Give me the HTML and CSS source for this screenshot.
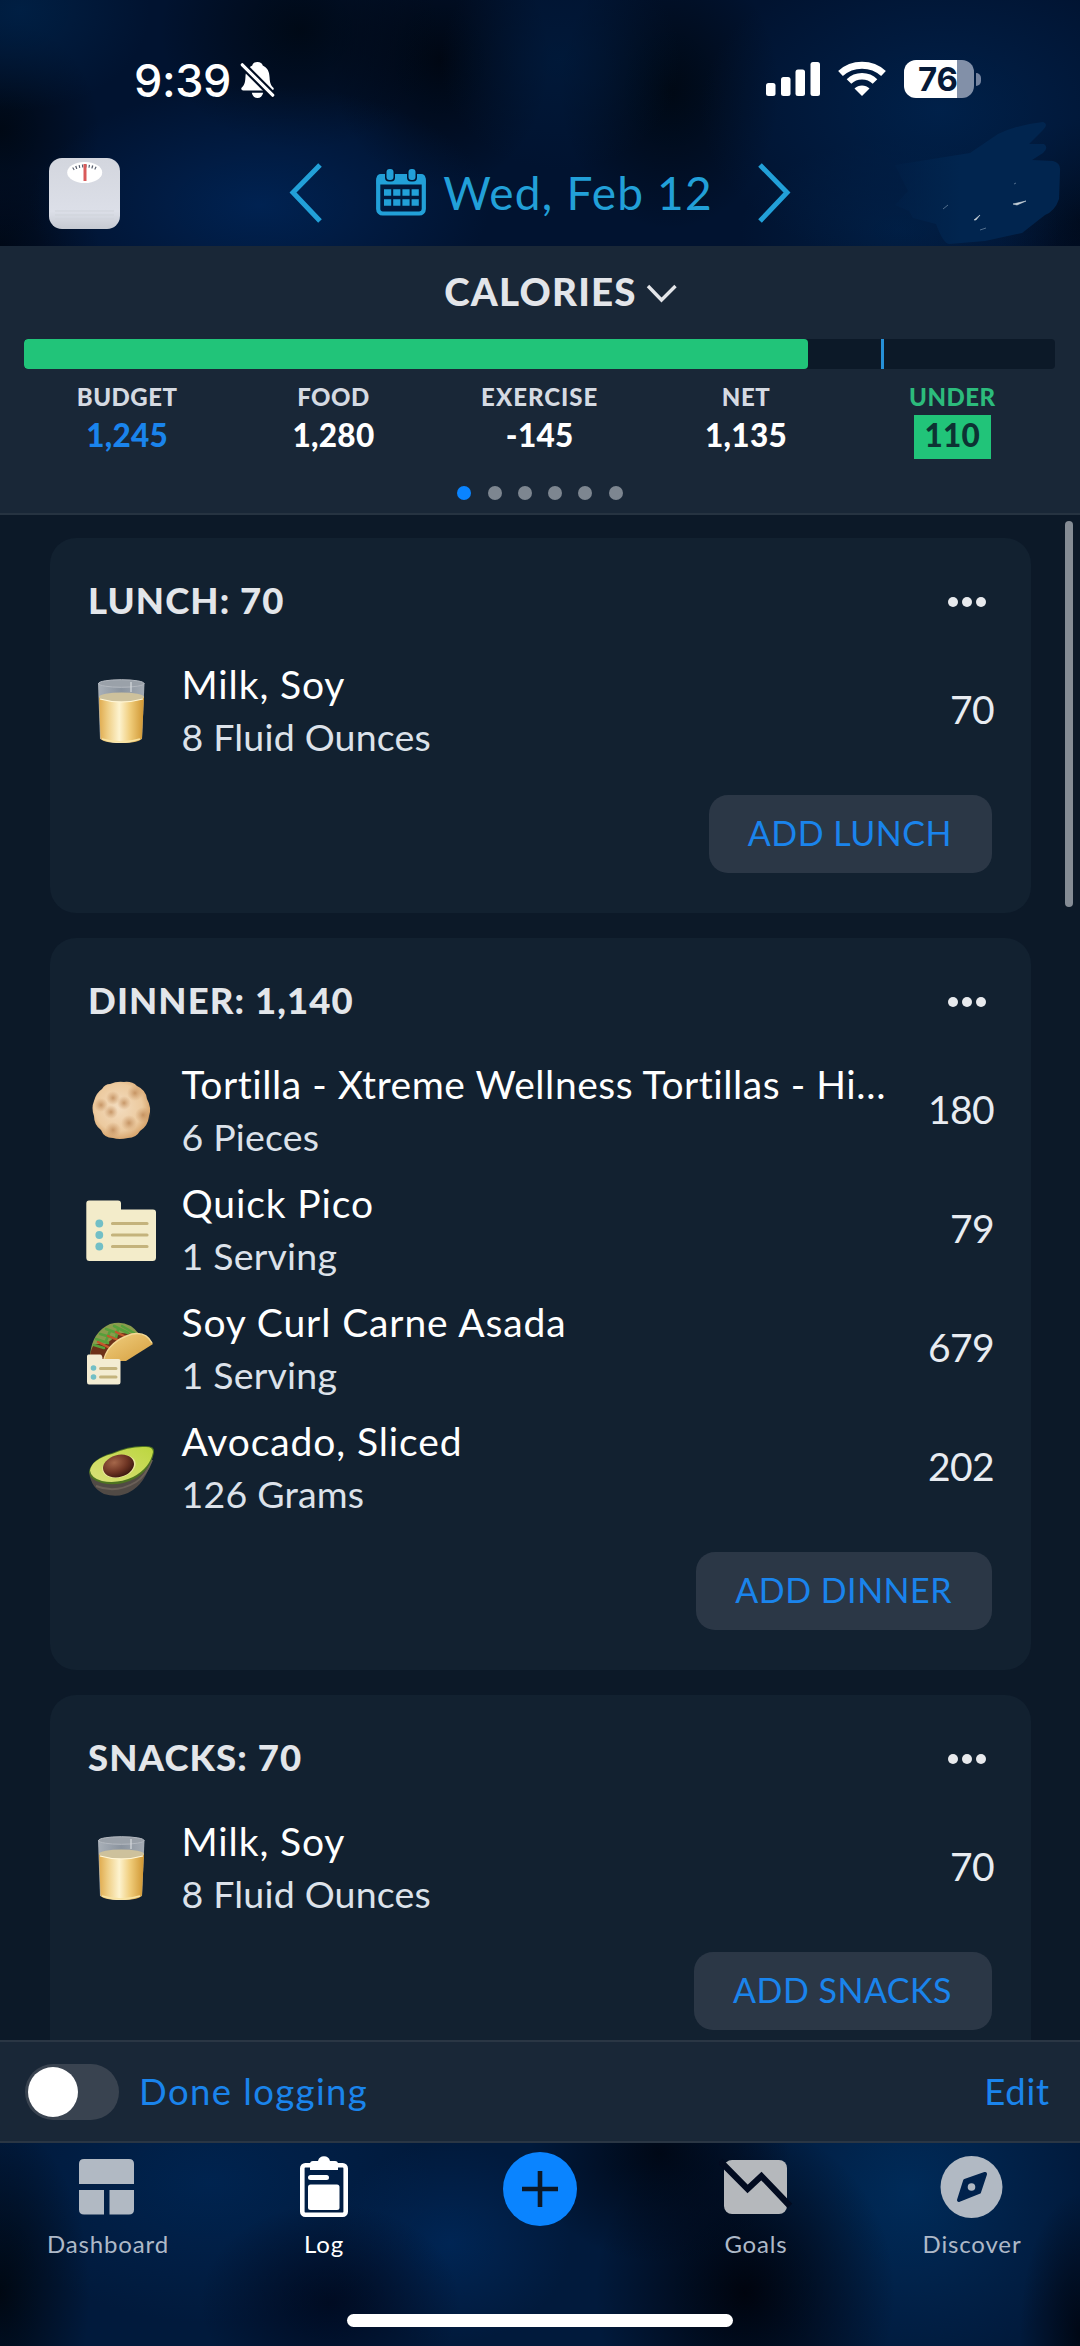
FILE: index.html
```
<!DOCTYPE html>
<html lang="en">
<head>
    <meta charset="UTF-8">
    <meta name="viewport" content="width=device-width, initial-scale=1.0">
    <title>Food Log</title>
    <link rel="stylesheet" href="styles.css">
</head>
<body>

<!-- shared icons -->
<svg class="defs" width="0" height="0">
    <defs>
        <linearGradient id="milk" x1="0" x2="1" y1="0" y2="0">
            <stop offset="0" stop-color="#e0ab4e"/>
            <stop offset="0.2" stop-color="#efcf87"/>
            <stop offset="0.45" stop-color="#fdf3cf"/>
            <stop offset="0.7" stop-color="#efcb78"/>
            <stop offset="1" stop-color="#cf9531"/>
        </linearGradient>
        <linearGradient id="glass" x1="0" x2="1" y1="0" y2="0">
            <stop offset="0" stop-color="#a9b0b8"/>
            <stop offset="0.5" stop-color="#8a939e"/>
            <stop offset="1" stop-color="#a4abb3"/>
        </linearGradient>
        <radialGradient id="dough" cx="0.45" cy="0.45" r="0.55">
            <stop offset="0" stop-color="#f3dcbf"/>
            <stop offset="0.75" stop-color="#ecca9f"/>
            <stop offset="1" stop-color="#d9a871"/>
        </radialGradient>
        <radialGradient id="char">
            <stop offset="0" stop-color="#b9824f" stop-opacity="0.75"/>
            <stop offset="1" stop-color="#c89462" stop-opacity="0"/>
        </radialGradient>
        <linearGradient id="shell" x1="0" x2="1" y1="0" y2="1">
            <stop offset="0" stop-color="#f0cf80"/>
            <stop offset="1" stop-color="#d69f3f"/>
        </linearGradient>
        <linearGradient id="flesh" x1="0" x2="1" y1="1" y2="0">
            <stop offset="0" stop-color="#dbe07a"/>
            <stop offset="1" stop-color="#bcd63f"/>
        </linearGradient>
        <radialGradient id="pit" cx="0.4" cy="0.3" r="0.7">
            <stop offset="0" stop-color="#a5674a"/>
            <stop offset="0.6" stop-color="#6f3524"/>
            <stop offset="1" stop-color="#401a11"/>
        </radialGradient>
        <linearGradient id="scale" x1="0" x2="0" y1="0" y2="1">
            <stop offset="0" stop-color="#d3d6de"/>
            <stop offset="0.75" stop-color="#dcdfe8"/>
            <stop offset="1" stop-color="#c6cad2"/>
        </linearGradient>
        <symbol id="icon-milk" viewBox="0 0 70 80">
            <path d="M12 14 L14 70 Q35 78 56 70 L58.500 14 Z" fill="url(#glass)"/>
            <path d="M13 28 L14.500 69 Q16 74 35 74 Q54 74 56 69 L58 28 Z" fill="url(#milk)"/>
            <ellipse cx="35.500" cy="28" rx="22.500" ry="4.500" fill="#cdc19c"/>
            <path d="M14 30 Q35 36 57 30" fill="none" stroke="#fff6d6" stroke-width="1.200"/>
            <ellipse cx="35.300" cy="14.500" rx="22.700" ry="3.800" fill="#9aa1a9" stroke="#b4b9c0"/>
            <path d="M45 13 V23" stroke="#d8dce0" stroke-width="1.200"/>
            <path d="M16 70 Q35 76 54 70" fill="none" stroke="#f8e3a2" stroke-width="1.500"/>
        </symbol>
        <symbol id="icon-folder" viewBox="0 0 70 80">
            <path d="M3 12.500 H32 Q35 12.500 35 15.500 V21.500 H67 Q70 21.500 70 24.500 V69.500 Q70 73 66.500 73 H3.500 Q0.300 73 0.300 69.500 V15.500 Q0.300 12.500 3 12.500 Z" fill="#f3ecca"/>
            <g fill="#72bfc6">
                <circle cx="13.300" cy="35.500" r="3.900"/>
                <circle cx="13.300" cy="47" r="3.900"/>
                <circle cx="13.300" cy="58.500" r="3.900"/>
            </g>
            <path d="M26.500 35.500 H61 M26.500 47 H61 M26.500 58.500 H61" stroke="#c4b37c" stroke-width="3.200" stroke-linecap="round"/>
        </symbol>
        <symbol id="icon-more" viewBox="0 0 50 12">
            <circle cx="11" cy="6" r="5"/>
            <circle cx="25" cy="6" r="5"/>
            <circle cx="39" cy="6" r="5"/>
        </symbol>
    </defs>
</svg>

<div class="top">
    <div class="status">
        <div class="status-left">
            <span class="clock">9:39</span>
            <svg class="bell" width="35" height="38" viewBox="0 0 36 40">
                <path d="M18 1 C21 1 23 2.500 23.500 4.800 C28.500 7 30.500 11.500 30.700 17 C31 23 32 25.500 35 28.500 Q35.500 31 33 31 H3 Q0.500 31 1 28.500 C4 25.500 5 23 5.300 17 C5.500 11.500 7.500 7 12.500 4.800 C13 2.500 15 1 18 1 Z M12 33.500 H24 Q22.500 39 18 39 Q13.500 39 12 33.500 Z" fill="#fff"/>
                <path d="M0 2 L36 38" stroke="#010d22" stroke-width="8"/>
                <path d="M2 4 L34 36" stroke="#fff" stroke-width="3.400" stroke-linecap="round"/>
            </svg>
        </div>
        <div class="status-right">
            <svg width="54" height="36" viewBox="0 0 54 36" fill="#fff">
                <rect x="0" y="22" width="9.500" height="13" rx="2.500"/>
                <rect x="15" y="16" width="9.500" height="19" rx="2.500"/>
                <rect x="29.500" y="8.500" width="9.500" height="26.500" rx="2.500"/>
                <rect x="44.500" y="1" width="9.500" height="34" rx="2.500"/>
            </svg>
            <svg class="wifi" width="48" height="36" viewBox="0 0 48 36" fill="none" stroke="#fff">
                <path d="M2.500 12.500 C14.500 1.500 33.500 1.500 45.500 12.500" stroke-width="7"/>
                <path d="M11 20.500 C18 13.500 30 13.500 37 20.500" stroke-width="6.500"/>
                <path d="M24 35 L16.500 27.500 C20.500 23.500 27.500 23.500 31.500 27.500 Z" fill="#fff" stroke="none"/>
            </svg>
            <div class="battery">
                <div class="battery-body">76</div>
                <div class="battery-tip"></div>
            </div>
        </div>
    </div>

    <div class="date-row">
        <svg class="scale" width="71" height="71" viewBox="0 0 71 71">
            <rect width="71" height="71" rx="13" fill="url(#scale)"/>
            <ellipse cx="35.700" cy="14.500" rx="17.500" ry="10.500" fill="#fff"/>
            <path d="M24 11 A16 9 0 0 1 48 11" fill="none" stroke="#555c6b" stroke-width="3" stroke-dasharray="1.200 2"/>
            <path d="M36 6 V23" stroke="#d95a5a" stroke-width="3"/>
            <path d="M6 53 H65 M6 57 H65 M6 61 H65" stroke="#cfd3da"/>
        </svg>
        <div class="date-nav">
            <svg width="33" height="60" viewBox="0 0 33 60" fill="none" stroke="#22a0d8" stroke-width="5">
                <path d="M31 2 L4 29.500 L31 58"/>
            </svg>
            <svg class="calendar" width="50" height="47" viewBox="0 0 50 47">
                <rect x="2.200" y="7" width="45.600" height="37.500" rx="4.500" fill="none" stroke="#22a0d8" stroke-width="4.200"/>
                <path d="M0.500 15.500 V10 Q0.500 5 5 5 H45 Q49.500 5 49.500 10 V15.500 Z" fill="#22a0d8"/>
                <rect x="9" y="-1" width="10" height="13.500" rx="4" fill="#011330"/>
                <rect x="31" y="-1" width="10" height="13.500" rx="4" fill="#011330"/>
                <rect x="10.500" y="0" width="7" height="11" rx="3" fill="#22a0d8"/>
                <rect x="32.500" y="0" width="7" height="11" rx="3" fill="#22a0d8"/>
                <path d="M8 23.500 H43 M8 33.500 H43" stroke="#22a0d8" stroke-width="6.500" stroke-dasharray="7.200 2"/>
            </svg>
            <span class="date">Wed, Feb 12</span>
            <svg width="33" height="60" viewBox="0 0 33 60" fill="none" stroke="#22a0d8" stroke-width="5">
                <path d="M2 2 L29 29.500 L2 58"/>
            </svg>
        </div>
        <svg class="smudge" width="166" height="124" viewBox="0 0 166 124">
            <path d="M0 44 L75 32 L103 13 Q125 3 148 1 Q154 3 148 9 L134 23 L149 23 Q154 27 148 32 L137 39 L158 40 Q166 42 165 50 L164 78 Q160 90 150 94 L127 112 L90 120 L54 123 Q48 122 41 103 L18 97 L14 90 L0 84 L13 70 Z" fill="url(#smear)"/>
            <linearGradient id="smear" x1="0" x2="1" y1="0" y2="0">
                <stop offset="0" stop-color="#01254f" stop-opacity="0.2"/>
                <stop offset="0.4" stop-color="#01254f"/>
            </linearGradient>
            <path d="M118 83 L131 80 L122 84 Z M79 99 L85 94 L81 99 Z" fill="#c9d3da" stroke="#c9d3da" stroke-width="0.600"/>
            <path d="M85 109 L91 107 M119 63 L121 62 M48 88 L53 84" stroke="#526f8e" stroke-width="1"/>
        </svg>
    </div>
</div>

<div class="summary">
    <div class="summary-title">
        CALORIES
        <svg width="32" height="20" viewBox="0 0 32 20" fill="none" stroke="#e3e5e9" stroke-width="3.400">
            <path d="M2 2 L15.500 16 L29.500 2"/>
        </svg>
    </div>
    <div class="bar">
        <div class="bar-fill"></div>
        <div class="bar-mark"></div>
    </div>
    <div class="stats">
        <div class="stat"><div class="label">BUDGET</div><div class="value blue">1,245</div></div>
        <div class="stat"><div class="label">FOOD</div><div class="value">1,280</div></div>
        <div class="stat"><div class="label wide">EXERCISE</div><div class="value">-145</div></div>
        <div class="stat"><div class="label">NET</div><div class="value">1,135</div></div>
        <div class="stat under"><div class="label">UNDER</div><div class="value badge">110</div></div>
    </div>
    <div class="dots">
        <i class="active"></i><i></i><i></i><i></i><i></i><i></i>
    </div>
</div>

<div class="log">
    <div class="scrollbar"></div>

    <div class="card">
        <div class="card-head">
            <h2>LUNCH: 70</h2>
            <svg class="more"><use href="#icon-more"/></svg>
        </div>
        <div class="item">
            <svg class="food"><use href="#icon-milk"/></svg>
            <div class="text">
                <div class="name">Milk, Soy</div>
                <div class="amount">8 Fluid Ounces</div>
            </div>
            <div class="cals">70</div>
        </div>
        <button class="add">ADD LUNCH</button>
    </div>

    <div class="card">
        <div class="card-head">
            <h2>DINNER: 1,140</h2>
            <svg class="more"><use href="#icon-more"/></svg>
        </div>
        <div class="item">
            <svg class="food" viewBox="0 0 70 80">
                <path d="M24 15 Q31 12 38 13 Q46 12 51 17 Q60 21 61 30 Q66 39 63 47 Q62 57 54 62 Q50 69 42 69 Q33 71 27 69 Q18 69 15 61 Q8 56 8 47 Q5 39 8 32 Q10 24 16 20 Q19 15 24 15 Z" fill="url(#dough)"/>
                <g fill="url(#char)">
                    <circle cx="27" cy="29" r="7"/><circle cx="49" cy="24" r="8"/>
                    <circle cx="38" cy="34" r="7"/><circle cx="15" cy="36" r="7"/>
                    <circle cx="25" cy="43" r="7"/><circle cx="43" cy="54" r="8"/>
                    <circle cx="27" cy="61" r="8"/><circle cx="57" cy="46" r="8"/>
                </g>
            </svg>
            <div class="text">
                <div class="name long">Tortilla - Xtreme Wellness Tortillas - Hi…</div>
                <div class="amount">6 Pieces</div>
            </div>
            <div class="cals">180</div>
        </div>
        <div class="item">
            <svg class="food"><use href="#icon-folder"/></svg>
            <div class="text">
                <div class="name">Quick Pico</div>
                <div class="amount">1 Serving</div>
            </div>
            <div class="cals">79</div>
        </div>
        <div class="item">
            <svg class="food" viewBox="0 0 70 80">
                <path d="M4 48 Q6 25 24 17 Q42 12 53 27 L20 54 Z" fill="#8a9c4c"/>
                <path d="M4 48 Q5 42 8 37 L20 37 L34 26 L50 27 L20 54 L4 50 Z" fill="#6d3119"/>
                <path d="M10 32 L22 36 M14 27 L28 31 M20 22 L34 27 M28 19 L42 26 M36 19 L48 26 M8 38 L18 41 M24 24 L20 34 M32 22 L30 31" stroke="#57a03b" stroke-width="2.600" stroke-linecap="round"/>
                <path d="M22 29 L32 33 M12 35 L22 40 M30 25 L40 30" stroke="#c4562c" stroke-width="2.400" stroke-linecap="round"/>
                <path d="M18 54 Q22 34 46 27 Q60 24 67 37 L40 54 Z" fill="url(#shell)"/>
                <path d="M18 52 Q23 34 46 27 Q60 24 66 36" fill="none" stroke="#f3d894" stroke-width="1.500"/>
                <path d="M2.500 47.500 H14 Q16.500 47.500 16.500 52 H32.500 Q34.500 52 34.500 54 V75 Q34.500 77.500 32 77.500 H3 Q1 77.500 1 75 V49.500 Q1 47.500 2.500 47.500 Z" fill="#f3ecd2"/>
                <circle cx="7.500" cy="61" r="2.800" fill="#72bfc6"/>
                <circle cx="7.500" cy="70" r="2.800" fill="#72bfc6"/>
                <path d="M14.500 61.500 H30 M14.500 70 H30" stroke="#c4b37c" stroke-width="3" stroke-linecap="round"/>
            </svg>
            <div class="text">
                <div class="name">Soy Curl Carne Asada</div>
                <div class="amount">1 Serving</div>
            </div>
            <div class="cals">679</div>
        </div>
        <div class="item">
            <svg class="food" viewBox="0 0 70 80">
                <path d="M3 46 Q5 62 18 68 Q34 73 47 64 Q62 54 68 25 L40 40 Z" fill="#514a45"/>
                <path d="M10 60 Q30 68 50 56 Q60 50 66 34" fill="none" stroke="#6b6058" stroke-width="2"/>
                <path d="M3 46 Q5 33 26 27 Q44 19 60 20 Q69 20 68 26 Q65 44 48 53 Q32 61 16 57 Q4 54 3 46 Z" fill="#4e7321"/>
                <path d="M4 44.500 Q6 33 26 28 Q44 20 60 21 Q67 21 67 26 Q64 42 47 51 Q32 58 16 55 Q5 52 4 44.500 Z" fill="url(#flesh)"/>
                <ellipse cx="33" cy="40.500" rx="17" ry="11" transform="rotate(-16 33 40.500)" fill="#e9e79c"/>
                <ellipse cx="32.500" cy="40" rx="15.800" ry="11" transform="rotate(-16 32.500 40)" fill="url(#pit)"/>
            </svg>
            <div class="text">
                <div class="name">Avocado, Sliced</div>
                <div class="amount">126 Grams</div>
            </div>
            <div class="cals">202</div>
        </div>
        <button class="add">ADD DINNER</button>
    </div>

    <div class="card">
        <div class="card-head">
            <h2>SNACKS: 70</h2>
            <svg class="more"><use href="#icon-more"/></svg>
        </div>
        <div class="item">
            <svg class="food"><use href="#icon-milk"/></svg>
            <div class="text">
                <div class="name">Milk, Soy</div>
                <div class="amount">8 Fluid Ounces</div>
            </div>
            <div class="cals">70</div>
        </div>
        <button class="add">ADD SNACKS</button>
    </div>
</div>

<div class="done-bar">
    <div class="toggle"><div class="knob"></div></div>
    <span class="done">Done logging</span>
    <span class="edit">Edit</span>
</div>

<div class="tabbar">
    <div class="tabs">
        <div class="tab">
            <svg width="74" height="74" viewBox="0 0 74 74" fill="#b1b9c3">
                <path d="M13 9 H58 Q63 9 63 14 V34 H8 V14 Q8 9 13 9 Z"/>
                <path d="M8 40 H33 V64.500 H13 Q8 64.500 8 59.500 Z"/>
                <path d="M38.500 40 H63 V59.500 Q63 64.500 58 64.500 H38.500 Z"/>
            </svg>
            <span>Dashboard</span>
        </div>
        <div class="tab selected">
            <svg width="74" height="74" viewBox="0 0 74 74" fill="#fff">
                <rect x="15.300" y="15.300" width="43.400" height="49.400" rx="3" fill="none" stroke="#fff" stroke-width="4.600"/>
                <path d="M23 20 V14 Q23 11 26 11 H31 A6.200 6.200 0 0 1 43 11 H48 Q51 11 51 14 V20 Z"/>
                <rect x="21" y="25" width="21" height="5" rx="2.500"/>
                <rect x="21" y="34.500" width="31.500" height="25.500" rx="2.500"/>
            </svg>
            <span>Log</span>
        </div>
        <div class="tab">
            <svg class="plus" width="74" height="74" viewBox="0 0 74 74">
                <circle cx="37" cy="37" r="37" fill="#0a84ff"/>
                <path d="M19 37 H55 M37 19 V55" stroke="#0c1827" stroke-width="4.600"/>
            </svg>
        </div>
        <div class="tab">
            <svg width="74" height="74" viewBox="0 0 74 74">
                <rect x="5" y="10" width="63" height="54" rx="8" fill="#b5b8bc"/>
                <path d="M1 11 L28.600 39 L42.400 26 L71 56" fill="none" stroke="#020b20" stroke-width="6.200"/>
            </svg>
            <span>Goals</span>
        </div>
        <div class="tab">
            <svg width="74" height="74" viewBox="0 0 74 74">
                <circle cx="36.500" cy="37" r="31" fill="#b1b9c3"/>
                <path d="M50 24 L44 42 L24 50 L30 31 Z" fill="#01224c" stroke="#01224c" stroke-width="4" stroke-linejoin="round"/>
                <circle cx="36.500" cy="37" r="3.800" fill="#b1b9c3"/>
            </svg>
            <span>Discover</span>
        </div>
    </div>
    <div class="home"></div>
</div>

</body>
</html>
```
FILE: styles.css
```
* {
    box-sizing: border-box;
}
body {
    margin: 0;
    width: 1080px;
    height: 2346px;
    display: flex;
    flex-direction: column;
    overflow: hidden;
    font-family: Lato, "Open Sans", sans-serif;
    background: #0c1928;
    color: #fff;
}
svg {
    display: block;
    flex-shrink: 0;
}
.defs {
    position: absolute;
}

/* status bar + date */
.top {
    height: 246px;
    flex-shrink: 0;
    background:
        radial-gradient(ellipse 230px 120px at 260px 205px, rgba(0, 38, 90, 0.8), transparent),
        radial-gradient(ellipse 130px 100px at 20px 10px, rgba(0, 34, 72, 0.8), transparent),
        radial-gradient(ellipse 240px 160px at 940px 110px, rgba(0, 36, 80, 0.8), transparent),
        radial-gradient(ellipse 160px 90px at 900px 230px, rgba(0, 36, 78, 0.6), transparent),
        radial-gradient(ellipse 120px 110px at 560px 60px, rgba(0, 28, 62, 0.6), transparent),
        radial-gradient(ellipse 140px 120px at 300px 30px, rgba(0, 7, 16, 0.8), transparent),
        radial-gradient(ellipse 110px 130px at 440px 60px, rgba(0, 5, 14, 0.85), transparent),
        radial-gradient(ellipse 100px 110px at 0 130px, rgba(0, 6, 14, 0.8), transparent),
        radial-gradient(ellipse 110px 140px at 670px 90px, rgba(0, 7, 16, 0.85), transparent),
        radial-gradient(ellipse 100px 80px at 0 246px, rgba(0, 6, 16, 0.8), transparent),
        radial-gradient(ellipse 80px 100px at 1080px 220px, rgba(0, 8, 22, 0.8), transparent),
        #011330;
}
.status {
    height: 140px;
    padding: 36px 99px 0 134px;
    display: flex;
    justify-content: space-between;
    align-items: center;
    padding-bottom: 18px;
}
.status-left, .status-right {
    display: flex;
    align-items: center;
}
.status-right {
    padding-bottom: 14px;
    margin-bottom: -14px;
}
.status-right > * {
    margin-top: 0;
}
.clock {
    font: 500 45px Inter, sans-serif;
    letter-spacing: -0.4px;
    padding-top: 3px;
}
.bell {
    margin-left: 9px;
    margin-top: 2px;
}
.wifi {
    margin-left: 18px;
    margin-right: 18px;
}
.status-right {
    padding: 0;
    margin: 0;
}
.battery {
    display: flex;
    align-items: center;
    gap: 2px;
}
.battery-body {
    width: 70px;
    height: 38px;
    border-radius: 12px;
    background: linear-gradient(to right, #fff 53px, #8290a8 53px);
    color: #061a38;
    font: 700 33px/39px Inter, sans-serif;
    text-align: right;
    padding-right: 16px;
}
.battery-tip {
    width: 5px;
    height: 13px;
    border-radius: 0 6px 6px 0;
    background: #7584a0;
}
.date-row {
    height: 106px;
    padding: 0 19px 0 49px;
    display: grid;
    grid-template-columns: 1fr auto 1fr;
    align-items: center;
}
.date-nav {
    display: flex;
    align-items: center;
    margin-bottom: 1px;
    transform: translateX(-15px);
}
.calendar {
    margin-left: 54px;
}
.date {
    font-size: 46px;
    letter-spacing: 1.2px;
    color: #22a0d8;
    margin: 0 45px 0 17px;
    white-space: nowrap;
}
.smudge {
    justify-self: end;
    margin: -20px 0 0;
}

/* calories summary */
.summary {
    height: 269px;
    flex-shrink: 0;
    background: #192737;
    border-bottom: 2px solid #263341;
    overflow: hidden;
}
.summary-title {
    height: 89px;
    margin-bottom: 4px;
    padding: 1px 0 0 42px;
    display: flex;
    justify-content: center;
    align-items: center;
    gap: 9px;
    font-size: 38.500px;
    font-weight: 900;
    letter-spacing: 1.200px;
    color: #e3e5e9;
}
.summary-title svg {
    margin-top: 6px;
}
.bar {
    height: 30px;
    margin: 0 25px 0 24px;
    border-radius: 4px;
    background: #0c1928;
    display: flex;
    overflow: hidden;
}
.bar-fill {
    width: 783.500px;
    border-radius: 4px;
    background: #21c479;
}
.bar-mark {
    width: 3.500px;
    margin-left: 73px;
    background: #2690d8;
}
.stats {
    margin: 13px 24px 0;
    display: grid;
    grid-template-columns: repeat(5, 206.300px);
}
.stat {
    display: flex;
    flex-direction: column;
    align-items: center;
}
.label {
    font-size: 24px;
    font-weight: 900;
    line-height: 29px;
    margin-bottom: 4px;
    letter-spacing: 0.500px;
    color: #d5dae2;
}
.label.wide {
    letter-spacing: 1px;
}
.value {
    font-size: 31.500px;
    font-weight: 900;
    line-height: 41px;
    padding-bottom: 3px;
    letter-spacing: 0.300px;
}
.blue {
    color: #1a84ec;
}
.under .label {
    color: #2cbb7c;
}
.badge {
    width: 77px;
    text-align: center;
    background: #21c479;
    color: #0d3233;
}
.dots {
    margin-top: 27px;
    display: flex;
    justify-content: center;
    gap: 16.300px;
}
.dots i {
    width: 14px;
    height: 14px;
    border-radius: 50%;
    background: #7d8690;
}
.dots .active {
    background: #0a84ff;
}

/* meals */
.log {
    height: 1525px;
    flex-shrink: 0;
    padding: 23px 49.500px 0;
    display: flex;
    flex-direction: column;
    gap: 25px;
    overflow: hidden;
    position: relative;
}
.scrollbar {
    position: absolute;
    right: 7px;
    top: 6px;
    width: 8px;
    height: 386px;
    border-radius: 4px;
    background: #858c95;
}
.card {
    flex-shrink: 0;
    padding: 36px 38.500px 40px 36.500px;
    border-radius: 26px;
    background: #122130;
    display: flex;
    flex-direction: column;
}
.card-head {
    height: 52px;
    margin-bottom: 23px;
    display: flex;
    justify-content: space-between;
    align-items: center;
}
h2 {
    margin: 0 0 0 2px;
    font-size: 36.500px;
    font-weight: 900;
    letter-spacing: 1.100px;
    color: #e3e6ea;
}
.more {
    width: 50px;
    height: 12px;
    margin-top: 3px;
    fill: #e8eaed;
}
.item {
    height: 119px;
    display: flex;
    align-items: center;
}
.food {
    width: 70px;
    height: 80px;
    margin-right: 25.500px;
}
.text {
    flex: 1;
    min-width: 0;
    white-space: nowrap;
    padding-top: 2px;
}
.name {
    font-size: 39px;
    line-height: 53px;
    letter-spacing: 0.900px;
}
.name.long {
    letter-spacing: 0.550px;
}
.amount {
    font-size: 37.500px;
    line-height: 51px;
    letter-spacing: 0.200px;
    color: #dce2ea;
}
.cals {
    font-size: 39px;
    letter-spacing: -0.600px;
    margin-right: -2px;
    color: #e8ecf1;
}
.add {
    align-self: flex-end;
    height: 78px;
    margin-top: 27px;
    padding: 0 40px 4px 39px;
    border: none;
    border-radius: 19px;
    background: #2b3746;
    color: #1a84ec;
    font-family: inherit;
    font-size: 34px;
    letter-spacing: 0.500px;
}

/* done logging */
.done-bar {
    height: 103px;
    flex-shrink: 0;
    padding: 0 30px 0 25px;
    border-top: 2px solid #2a3644;
    border-bottom: 2px solid #2a3644;
    background: #192737;
    display: flex;
    align-items: center;
    font-size: 36.500px;
    letter-spacing: 1.400px;
    color: #1a84ec;
}
.toggle {
    width: 94px;
    height: 56px;
    padding: 3px;
    border-radius: 28px;
    background: #394350;
}
.knob {
    width: 50px;
    height: 50px;
    border-radius: 50%;
    background: #fff;
}
.done {
    margin-left: 20px;
    padding-bottom: 2px;
}
.edit {
    margin-left: auto;
    padding-bottom: 2px;
    letter-spacing: 0.800px;
}

/* tabs */
.tabbar {
    height: 203px;
    flex-shrink: 0;
    padding-top: 7px;
    background:
        radial-gradient(ellipse 90px 170px at 0 150px, rgba(0, 6, 14, 0.9), transparent),
        radial-gradient(ellipse 130px 100px at 330px 160px, rgba(0, 8, 28, 0.8), transparent),
        radial-gradient(ellipse 130px 110px at 660px 10px, rgba(0, 6, 18, 0.9), transparent),
        radial-gradient(ellipse 150px 170px at 745px 150px, rgba(0, 3, 12, 0.95), transparent),
        radial-gradient(ellipse 60px 140px at 1080px 190px, rgba(0, 5, 16, 0.9), transparent),
        radial-gradient(ellipse 180px 180px at 910px 50px, rgba(0, 46, 94, 0.85), transparent),
        radial-gradient(ellipse 120px 100px at 450px 100px, rgba(0, 40, 90, 0.8), transparent),
        radial-gradient(ellipse 220px 140px at 210px 40px, rgba(0, 38, 84, 0.8), transparent),
        #011a3c;
}
.tabs {
    display: grid;
    grid-template-columns: repeat(5, 1fr);
}
.tab {
    display: flex;
    flex-direction: column;
    align-items: center;
    height: 109px;
    font-size: 24px;
    line-height: 30px;
    letter-spacing: 0.850px;
    color: #aeb9c8;
}
.tab span {
    margin-top: 5px;
}
.plus {
    margin-top: 2px;
}
.selected {
    color: #fff;
}
.home {
    width: 386px;
    height: 13px;
    margin: 55px auto 0;
    border-radius: 7px;
    background: #fff;
}
```
